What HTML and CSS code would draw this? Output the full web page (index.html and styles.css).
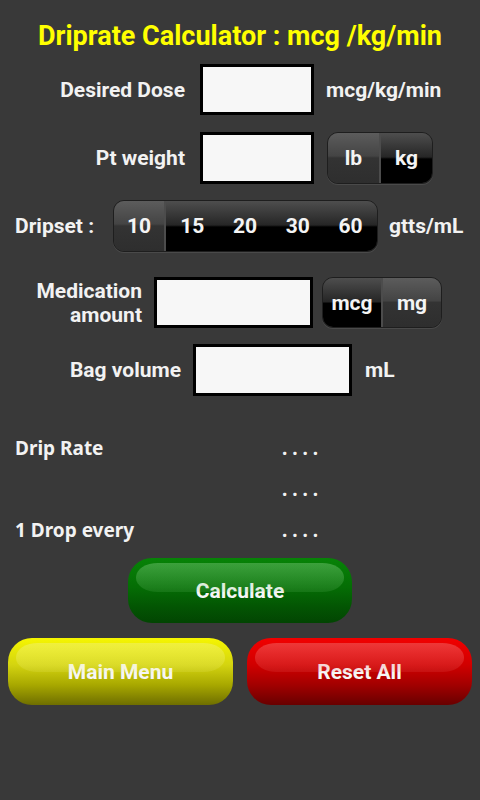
FILE: index.html
```html
<!DOCTYPE html>
<html>
<head>
<meta charset="utf-8">
<link rel="stylesheet" href="styles.css">
</head>
<body>
<div class="screen">
  <h1 class="title">Driprate Calculator : mcg /kg/min</h1>

  <div class="row row1">
    <div class="label lab1">Desired Dose</div>
    <div class="field f-small"></div>
    <div class="unit u1">mcg/kg/min</div>
  </div>

  <div class="row row2">
    <div class="label lab1">Pt weight</div>
    <div class="field f-small"></div>
    <div class="seg seg-weight">
      <div class="segi off div">lb</div>
      <div class="segi on">kg</div>
    </div>
  </div>

  <div class="row row3">
    <div class="label lab3">Dripset :</div>
    <div class="seg seg-drip">
      <div class="segi off div">10</div>
      <div class="segi on">15</div>
      <div class="segi on">20</div>
      <div class="segi on">30</div>
      <div class="segi on">60</div>
    </div>
    <div class="unit u3">gtts/mL</div>
  </div>

  <div class="row row4">
    <div class="label lab4">Medication<br>amount</div>
    <div class="field f-wide4"></div>
    <div class="seg seg-med">
      <div class="segi on div">mcg</div>
      <div class="segi off">mg</div>
    </div>
  </div>

  <div class="row row5">
    <div class="label lab5">Bag volume</div>
    <div class="field f-wide5"></div>
    <div class="unit u5">mL</div>
  </div>

  <div class="results">
    <div class="rlabel">Drip Rate</div><div class="rval">. . . .</div>
    <div class="rlabel"></div><div class="rval">. . . .</div>
    <div class="rlabel">1 Drop every</div><div class="rval">. . . .</div>
  </div>

  <div class="calc-wrap">
    <div class="btn green">Calculate</div>
  </div>
  <div class="bottom">
    <div class="btn yellow">Main Menu</div>
    <div class="btn red">Reset All</div>
  </div>
</div>
</body>
</html>
```

FILE: styles.css
```css
html, body {
  margin: 0;
  padding: 0;
  background: #393939;
}
.screen {
  width: 480px;
  height: 800px;
  background: #393939;
  font-family: Roboto, "Liberation Sans", sans-serif;
  font-weight: bold;
  color: #f2f2f2;
  overflow: hidden;
}
.title {
  margin: 0;
  padding-top: 20px;
  height: 32px;
  line-height: 32px;
  text-align: center;
  font-size: 27px;
  font-weight: bold;
  color: #ffff00;
  white-space: nowrap;
}
.row {
  display: flex;
  align-items: center;
}
.label {
  font-size: 21px;
  text-align: right;
  line-height: 24px;
  flex: none;
}
.unit {
  font-size: 21px;
  flex: none;
}
.field {
  box-sizing: border-box;
  border: 3px solid #000;
  background: #f7f7f7;
  height: 51px;
  flex: none;
}
.f-small { width: 114px; }
.f-wide4 { width: 159px; }
.f-wide5 { width: 159px; height: 52px; }

.row1 { margin-top: 12px; height: 51px; }
.lab1 { width: 185px; margin-right: 15px; }
.u1 { margin-left: 12px; }

.row2 { margin-top: 17px; height: 52px; }
.row2 .field { height: 52px; }

.row3 { margin-top: 16px; height: 52px; padding-left: 15px; }
.lab3 { width: 98px; text-align: left; }
.u3 { margin-left: 11px; }

.row4 { margin-top: 25px; height: 51px; }
.lab4 { width: 142px; margin-right: 12px; }

.row5 { margin-top: 16px; height: 52px; }
.lab5 { width: 181px; margin-right: 12px; }
.u5 { margin-left: 13px; }

/* segmented controls */
.seg {
  display: flex;
  box-sizing: border-box;
  height: 52px;
  border-radius: 11px;
  border: 1px solid #1e1e1e;
  box-shadow: 0 1px 0 #4a4a4a;
  overflow: hidden;
  flex: none;
}
.seg-weight { width: 106px; margin-left: 13px; }
.seg-drip { width: 265px; }
.seg-med { width: 120px; height: 51px; margin-left: 9px; }
.segi {
  flex: 1;
  display: flex;
  align-items: center;
  justify-content: center;
  font-size: 21px;
  color: #f4f4f4;
}
.segi.off {
  background: linear-gradient(to bottom, #5c5c5c 0%, #444 46%, #333 50%, #2e2e2e 100%);
}
.segi.on {
  background: linear-gradient(to bottom, #4e4e4e 0%, #262626 48%, #000 52%, #000 100%);
}
.segi.div {
  border-right: 2px solid #4c4c4c;
}
.seg-drip .segi:first-child { flex: none; width: 50px; }

/* results */
.results {
  margin-top: 32px;
  display: grid;
  grid-template-columns: 267px 1fr;
  grid-auto-rows: 41px;
  padding-left: 15px;
  font-family: "Noto Sans", "Open Sans", sans-serif;
  font-size: 19px;
  font-weight: bold;
  line-height: 41px;
}
.rlabel { color: #f2f2f2; }
.rval { color: #f2f2f2; }

/* buttons */
.calc-wrap {
  margin-top: 7px;
  display: flex;
  justify-content: center;
}
.bottom {
  margin-top: 15px;
  display: flex;
  justify-content: space-between;
  padding: 0 8px;
}
.btn {
  position: relative;
  box-sizing: border-box;
  display: flex;
  align-items: center;
  justify-content: center;
  font-size: 21px;
  color: #f6f6f6;
  border-radius: 24px;
  overflow: hidden;
}
.btn::before {
  content: "";
  position: absolute;
  top: 5px;
  left: 8px;
  right: 8px;
  height: 44%;
  border-radius: 22px / 14px;
}
.green {
  width: 224px;
  height: 65px;
  background: linear-gradient(to bottom, #078307 0%, #056d05 45%, #035503 75%, #024502 100%);
}
.green::before {
  background: linear-gradient(to bottom, rgba(140,210,140,0.4), rgba(120,200,120,0.15));
}
.yellow, .red {
  width: 225px;
  height: 67px;
}
.yellow {
  background: linear-gradient(to bottom, #f6f600 0%, #d4d410 40%, #a8a800 70%, #6e6e00 100%);
}
.yellow::before {
  background: linear-gradient(to bottom, rgba(240,240,120,0.5), rgba(240,240,120,0.15));
}
.red {
  background: linear-gradient(to bottom, #f20000 0%, #d00000 40%, #a20000 70%, #680000 100%);
}
.red::before {
  background: linear-gradient(to bottom, rgba(240,110,110,0.5), rgba(240,110,110,0.15));
}
```
